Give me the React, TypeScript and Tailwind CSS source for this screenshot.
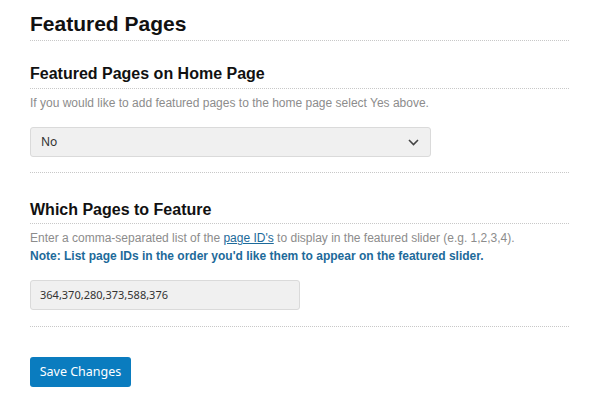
import React from "react";

export default function App() {
  return (
    <div className="min-h-[411px] w-[598px] bg-white pl-[30px] font-['Liberation_Sans',Arial,sans-serif]">
      <div className="w-[539px]">
        <h1 className="mt-[11px] border-b border-dotted border-[#c8c8c8] pb-[4px] text-[21px] font-bold leading-[25px] text-[#111]">
          Featured Pages
        </h1>

        <div className="border-b border-dotted border-[#c8c8c8] pb-[15px]">
          <h2 className="mt-[23px] border-b border-dotted border-[#c8c8c8] pb-[4px] text-[16px] font-bold leading-[20px] text-[#111]">
            Featured Pages on Home Page
          </h2>
          <p className="mt-[5px] text-[12px] leading-[18px] text-[#8c8c8c]">
            If you would like to add featured pages to the home page select Yes above.
          </p>
          <div className="mt-[15px] flex h-[30px] w-[401px] items-center justify-between rounded-[3px] border border-[#dadada] bg-[#f0f0f0] pl-[10px] pr-[11px] font-['Noto_Sans','Open_Sans',sans-serif] text-[12px] text-[#333]">
            <span>No</span>
            <svg width="11" height="7" viewBox="0 0 11 7" fill="none">
              <path d="M1 1L5.5 5.5L10 1" stroke="#444" strokeWidth="1.6" />
            </svg>
          </div>
        </div>

        <div className="border-b border-dotted border-[#c8c8c8] pb-[16px]">
          <h2 className="mt-[27px] border-b border-dotted border-[#c8c8c8] pb-[3px] text-[16px] font-bold leading-[20px] text-[#111]">
            Which Pages to Feature
          </h2>
          <p className="mt-[5px] text-[12px] leading-[18px] text-[#8c8c8c]">
            Enter a comma-separated list of the{" "}
            <a href="#" className="text-[#1d6a9a] underline">
              page ID's
            </a>{" "}
            to display in the featured slider (e.g. 1,2,3,4).
            <br />
            <strong className="font-bold text-[#1d6a9a]">
              Note: List page IDs in the order you'd like them to appear on the featured slider.
            </strong>
          </p>
          <div className="mt-[15px] flex h-[30px] w-[270px] items-center rounded-[3px] border border-[#dadada] bg-[#f0f0f0] pl-[9px] font-['Noto_Sans','Open_Sans',sans-serif] text-[11px] text-[#333]">
            364,370,280,373,588,376
          </div>
        </div>

        <button className="mt-[30px] flex h-[30px] w-[101px] items-center justify-center rounded-[3px] bg-[#0a7cbf] font-['Noto_Sans','Open_Sans',sans-serif] text-[12.5px] text-white">
          Save Changes
        </button>
      </div>
    </div>
  );
}
